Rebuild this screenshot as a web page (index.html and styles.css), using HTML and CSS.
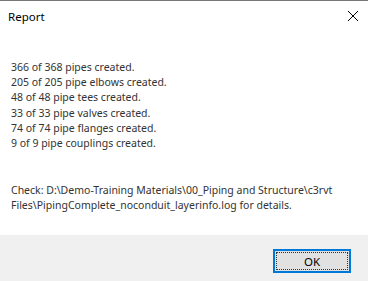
FILE: index.html
```html
<!DOCTYPE html>
<html>
<head>
<meta charset="utf-8">
<link rel="stylesheet" href="styles.css">
</head>
<body>
<div class="window">
  <div class="titlebar">
    <span class="title">Report</span>
    <svg class="close" width="12" height="12" viewBox="0 0 12 12"><path d="M1 1 L11 11 M11 1 L1 11" stroke="#000" stroke-width="1" fill="none"/></svg>
  </div>
  <div class="content">
    <div class="lines">
      <div>366 of 368 pipes created.</div>
      <div>205 of 205 pipe elbows created.</div>
      <div>48 of 48 pipe tees created.</div>
      <div>33 of 33 pipe valves created.</div>
      <div>74 of 74 pipe flanges created.</div>
      <div>9 of 9 pipe couplings created.</div>
    </div>
    <div class="check">Check: D:\Demo-Training Materials\00_Piping and Structure\c3rvt<br>Files\PipingComplete_noconduit_layerinfo.log for details.</div>
  </div>
  <div class="footer">
    <button class="ok"><span class="focus">OK</span></button>
  </div>
</div>
</body>
</html>
```
FILE: styles.css
```css
html, body {
  margin: 0;
  padding: 0;
  background: #fff;
}
.window {
  width: 368px;
  height: 281px;
  display: flex;
  flex-direction: column;
  font-family: "Noto Sans", "Open Sans", sans-serif;
  font-size: 10.5px;
  color: #000;
  box-sizing: border-box;
}
.titlebar {
  height: 31px;
  border-top: 1px solid #777;
  box-sizing: border-box;
  display: flex;
  align-items: center;
  justify-content: space-between;
  padding: 0 9px 0 8px;
}
.title {
  font-size: 11.5px;
  color: #000;
}
.close {
  display: block;
}
.content {
  flex: 1;
  padding: 29px 11px 0 11px;
  color: #333;
  line-height: 15.2px;
  white-space: nowrap;
}
.check {
  margin-top: 32px;
}
.footer {
  height: 46px;
  background: #f0f0f0;
  display: flex;
  justify-content: flex-end;
  align-items: flex-start;
  padding: 14px 17px 0 0;
  box-sizing: border-box;
}
.ok {
  width: 78px;
  height: 24px;
  border: 2px solid #0078d7;
  background: #e1e1e1;
  padding: 1px;
  margin: 0;
  box-sizing: border-box;
  display: flex;
  font: inherit;
}
.focus {
  flex: 1;
  border: 1px dotted #333;
  display: flex;
  align-items: center;
  justify-content: center;
  color: #000;
  font-size: 11.5px;
}
```
